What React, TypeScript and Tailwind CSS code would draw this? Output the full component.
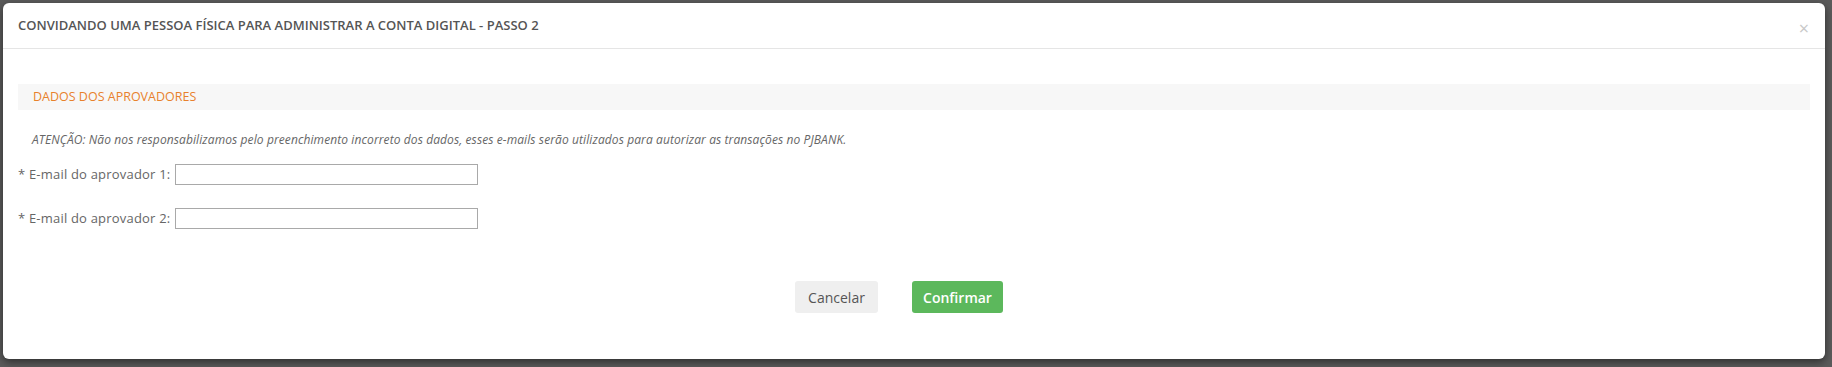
const font = { fontFamily: '"Open Sans", "DejaVu Sans", sans-serif' };

const EmailField = ({ n }: { n: number }) => (
  <div className="flex items-center">
    <label className="text-[13px] text-[#666] tracking-[0.2px] whitespace-nowrap mr-[5px]">
      * E-mail do aprovador {n}:
    </label>
    <input
      type="text"
      className="w-[303px] h-[21px] border border-[#a9a9a9] bg-white outline-none"
    />
  </div>
);

export default function App() {
  return (
    <div
      className="w-[1832px] h-[367px] bg-[#5b5b5b] pt-[3px] pl-[3px] overflow-hidden"
      style={font}
    >
      <div className="w-[1822px] h-[356px] bg-white rounded-[6px] shadow-[0_3px_9px_rgba(0,0,0,0.5)] flex flex-col">
        <div className="h-[46px] shrink-0 flex items-center justify-between pl-[15px] pr-[16px] border-b border-[#e5e5e5]">
          <h4 className="text-[13px] font-semibold text-[#555] mt-[1px]">
            CONVIDANDO UMA PESSOA FÍSICA PARA ADMINISTRAR A CONTA DIGITAL - PASSO 2
          </h4>
          <button className="text-[18px] leading-none text-[#c8c8c8] mt-[5px]">×</button>
        </div>

        <div className="px-[15px] pt-[35px]">
          <div className="h-[26px] bg-[#f7f7f7] pl-[15px] flex items-center">
            <span className="text-[12.5px] text-[#e8812c]">DADOS DOS APROVADORES</span>
          </div>

          <p className="mt-[22px] pl-[14px] text-[12px] italic text-[#666] tracking-[0.1px] leading-[16px]">
            ATENÇÃO: Não nos responsabilizamos pelo preenchimento incorreto dos dados, esses e-mails
            serão utilizados para autorizar as transações no PJBANK.
          </p>

          <div className="mt-[16px] flex flex-col gap-[23px]">
            <EmailField n={1} />
            <EmailField n={2} />
          </div>

          <div className="mt-[52px] flex justify-center gap-[34px] pr-[30px]">
            <button className="w-[83px] h-[32px] rounded-[3px] bg-[#efefef] text-[14px] text-[#555]">
              Cancelar
            </button>
            <button className="w-[91px] h-[32px] rounded-[3px] bg-[#5cb85c] text-[14px] font-semibold text-white">
              Confirmar
            </button>
          </div>
        </div>
      </div>
    </div>
  );
}
